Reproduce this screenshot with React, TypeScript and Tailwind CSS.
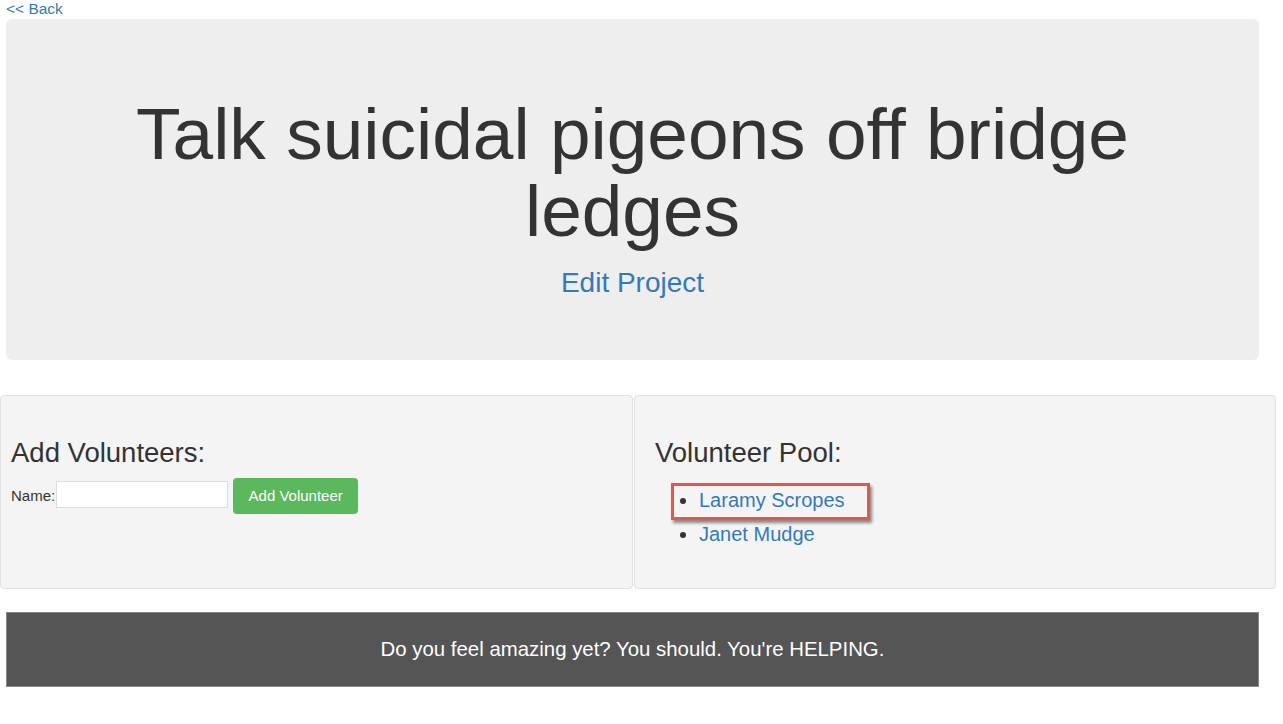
import React from 'react';

const font = { fontFamily: '"Liberation Sans", Arial, sans-serif' };

const volunteers = ['Laramy Scropes', 'Janet Mudge'];

const App: React.FC = () => {
  return (
    <div className="min-h-screen bg-white text-[#333]" style={font}>
      {/* Back link */}
      <a href="#" className="block pl-[6px] text-[15.5px] leading-[17px] text-[#337ab7]">
        &lt;&lt; Back
      </a>

      {/* Jumbotron */}
      <div className="ml-[6px] mt-[2px] w-[1253px] rounded-[6px] bg-[#eeeeee] px-[60px] pt-[76px] pb-[62px] text-center">
        <h1 className="text-[73px] leading-[77px] font-normal">Talk suicidal pigeons off bridge ledges</h1>
        <a href="#" className="mt-[19px] block text-[28px] leading-[30px] text-[#337ab7]">
          Edit Project
        </a>
      </div>

      {/* Panels */}
      <div className="mt-[35px] flex gap-[1px]">
        <div className="h-[194px] w-[633px] rounded-[4px] border border-[#e0e0e0] bg-[#f4f4f4] pl-[10px] pt-[42px]">
          <h3 className="text-[27.5px] leading-[30px]">Add Volunteers:</h3>
          <div className="mt-[10px] flex items-center">
            <label className="text-[15px] leading-[20px]">Name:</label>
            <input
              type="text"
              className="ml-[1px] mt-[-3px] h-[27px] w-[172px] border border-[#dddddd] bg-white px-1 text-[15px] outline-none"
            />
            <button className="ml-[5px] h-[36px] w-[125px] rounded-[4px] bg-[#5cb85c] text-[15px] text-white">
              Add Volunteer
            </button>
          </div>
        </div>

        <div className="h-[194px] w-[642px] rounded-[4px] border border-[#e0e0e0] bg-[#f4f4f4] pl-[20px] pt-[42px]">
          <h3 className="text-[27.5px] leading-[30px]">Volunteer Pool:</h3>
          <ul className="relative mt-[15px] list-disc pl-[44px] text-[20px] leading-[34px]">
            {volunteers.map((v) => (
              <li key={v}>
                <a href="#" className="text-[#337ab7]">
                  {v}
                </a>
              </li>
            ))}
            {/* highlight annotation */}
            <div className="pointer-events-none absolute left-[16px] top-0 h-[37px] w-[199px] border-[3px] border-[#e5574a] shadow-[2px_3px_3px_rgba(0,0,0,0.45)]" />
          </ul>
        </div>
      </div>

      {/* Footer */}
      <div className="ml-[6px] mt-[23px] flex h-[75px] w-[1253px] items-center justify-center border border-[#888888] bg-[#555555] text-[20.4px] text-white">
        Do you feel amazing yet? You should. You're HELPING.
      </div>
    </div>
  );
};

export default App;
